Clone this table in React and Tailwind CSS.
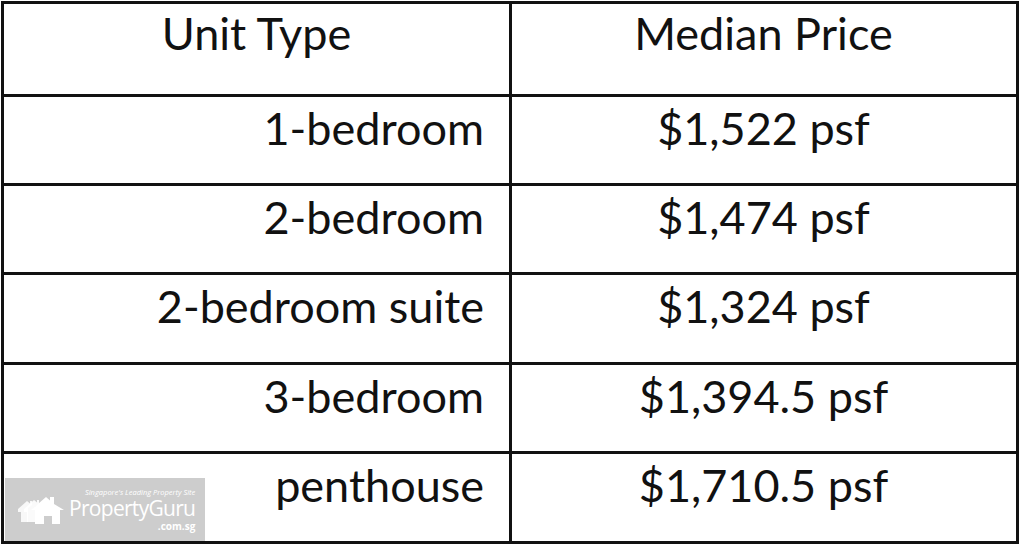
import React from 'react';

const rows = [
  ['1-bedroom', '$1,522 psf', 'h-[89px]'],
  ['2-bedroom', '$1,474 psf', 'h-[89px]'],
  ['2-bedroom suite', '$1,324 psf', 'h-[90px]'],
  ['3-bedroom', '$1,394.5 psf', 'h-[89px]'],
  ['penthouse', '$1,710.5 psf', 'h-[87px]'],
];

const HouseIcon = () => (
  <svg width="48" height="30" viewBox="0 0 48 30" fill="#fff">
    <path d="M1 14 L10 6 L13 8.5 L13 6 L15 6 L15 10 L11 13 L11 27 L4 27 L4 17 L1 17 Z" opacity="0.85" />
    <path d="M7 14 L17 5 L20 7.5 L20 5 L22 5 L22 9 L18 12 L18 27 L10 27 L10 17 L7 17 Z" opacity="0.9" />
    <path d="M14 15 L29 2 L33 5.5 L33 2 L37 2 L37 9 L47 15 L43 15 L43 29 L35 29 L35 21 L27 21 L27 29 L18 29 L18 15 Z" />
  </svg>
);

const App = () => {
  return (
    <div className="w-[1024px] h-[548px] bg-white relative overflow-hidden" style={{ fontFamily: 'Lato, "Open Sans", sans-serif' }}>
      <div className="ml-[1px] mt-[1px] w-[1018px] border-[3px] border-[#111] text-[45px] leading-none text-[#111]">
        <div className="grid grid-cols-[505px_3px_503px] h-[93px] border-b-[3px] border-[#111]">
          <div className="text-center pt-[7px]">Unit Type</div>
          <div className="bg-[#111]" />
          <div className="text-center pt-[7px]">Median Price</div>
        </div>
        {rows.map(([type, price, h], i) => (
          <div
            key={type}
            className={`grid grid-cols-[505px_3px_503px] ${h} ${i < rows.length - 1 ? 'border-b-[3px] border-[#111]' : ''}`}
          >
            <div className="text-right pr-[25px] pt-[9px]">{type}</div>
            <div className="bg-[#111]" />
            <div className="text-center pt-[9px]">{price}</div>
          </div>
        ))}
      </div>

      <div className="absolute left-[5px] top-[478px] w-[200px] h-[63px] bg-[#cdcdcd] flex items-center pl-[12px] text-white" style={{ fontFamily: '"Open Sans", sans-serif' }}>
        <HouseIcon />
        <div className="flex flex-col items-end ml-[4px]">
          <span className="text-[7.5px] leading-[8px] italic mb-[2px] whitespace-nowrap">Singapore's Leading Property Site</span>
          <span className="text-[21px] leading-[21px] tracking-[-0.7px] whitespace-nowrap">PropertyGuru</span>
          <span className="text-[10px] leading-[10px] font-bold mt-[2px]">.com.sg</span>
        </div>
      </div>
      <div className="absolute left-[1px] top-[541px] w-[1018px] h-[3px] bg-[#111]" />
    </div>
  );
};

export default App;
